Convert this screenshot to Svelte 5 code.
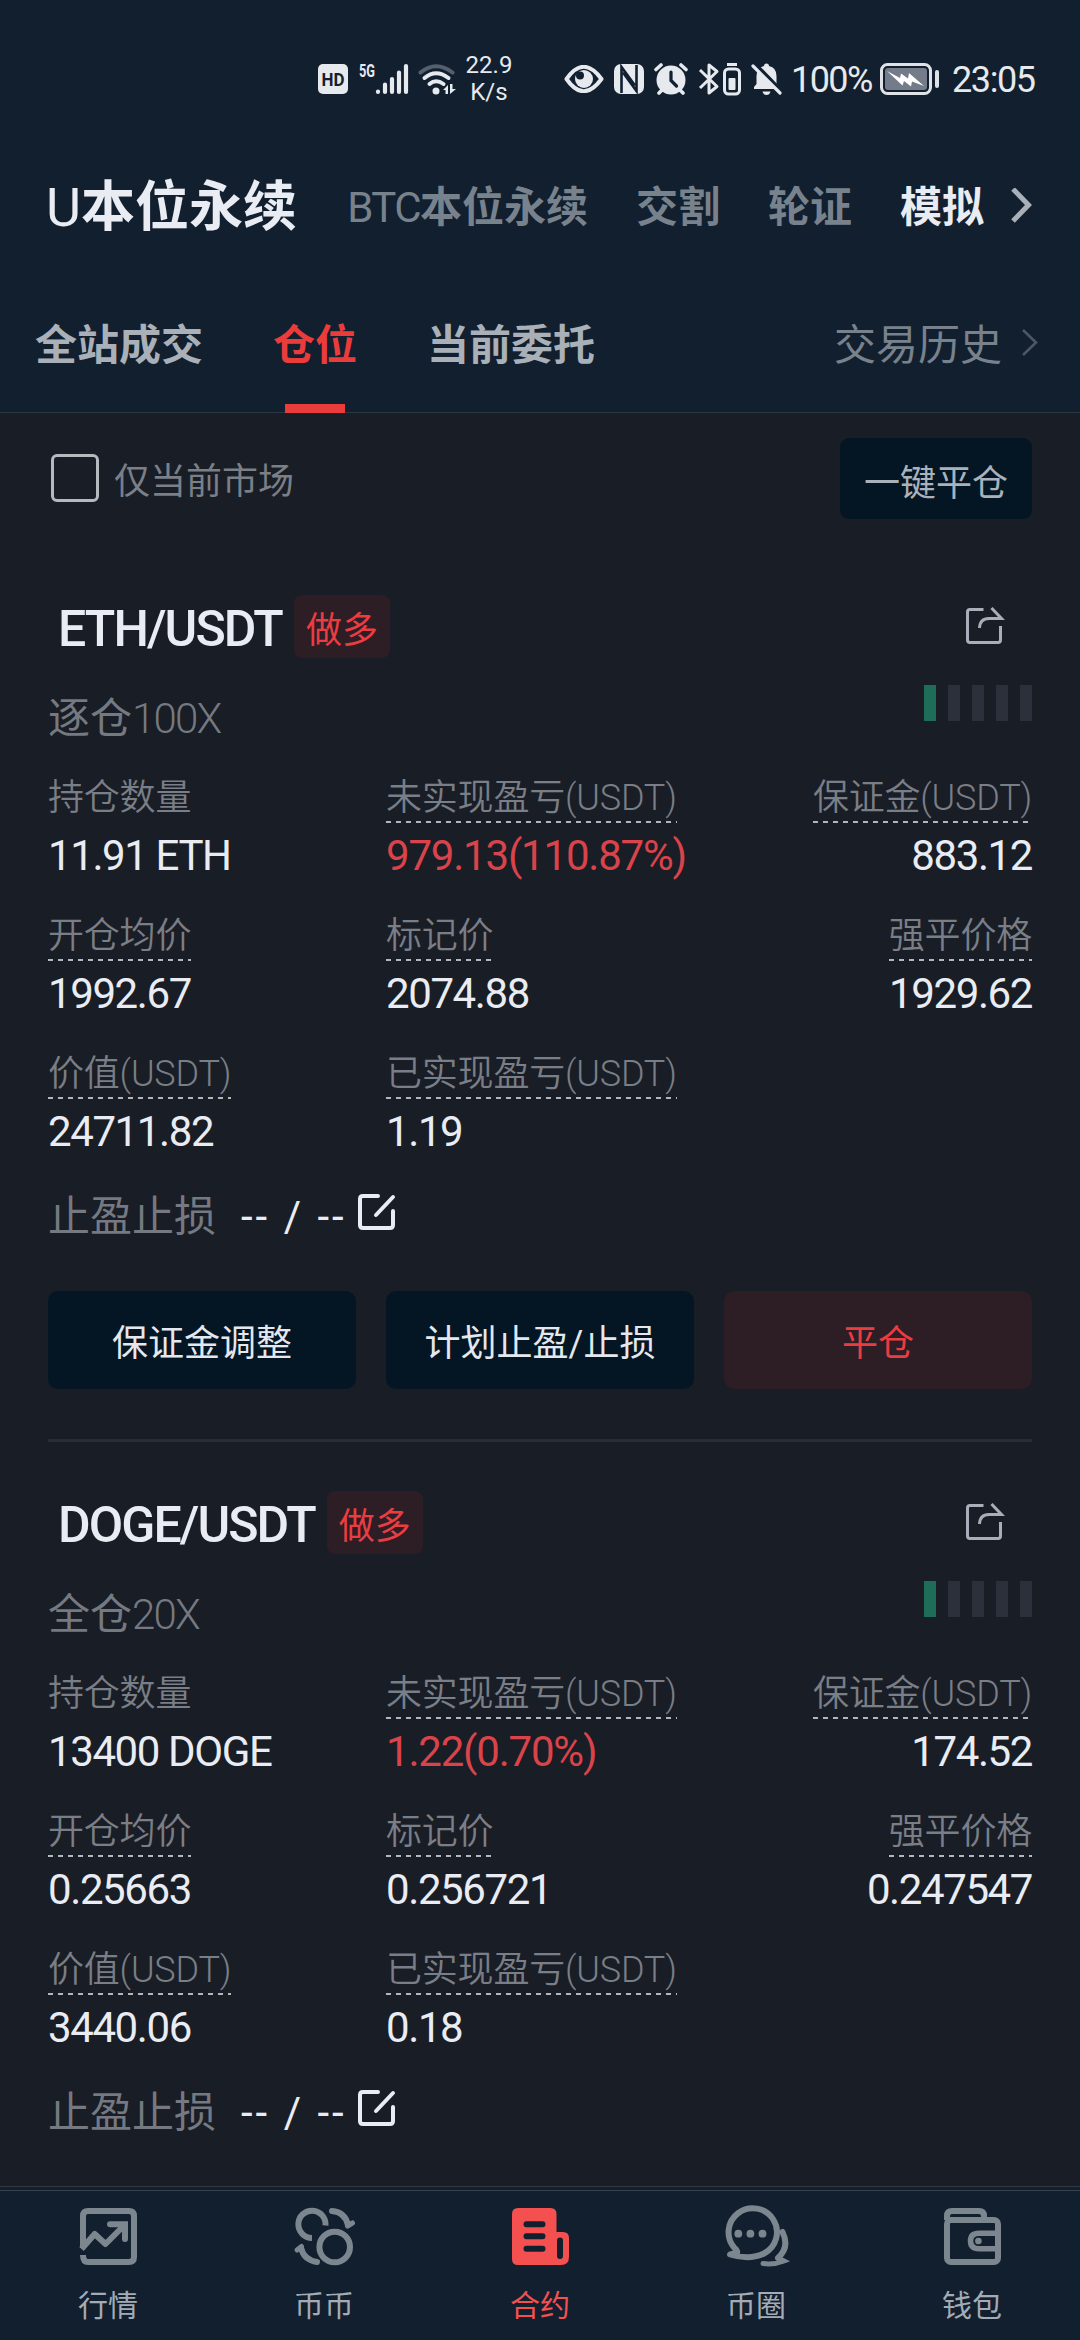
<script lang="ts">
  type Field = {
    label: string;
    value: string;
    plain?: boolean;
    loss?: boolean;
  };

  type Position = {
    pair: string;
    side: string;
    mode: string;
    leverage: string;
    risk: number;
    fields: Field[];
    actions?: boolean;
  };

  const markets = [
    { latin: 'BTC', name: '本位永续' },
    { latin: '', name: '交割' },
    { latin: '', name: '轮证' },
    { latin: '', name: '模拟', bright: true },
  ];

  const positions: Position[] = [
    {
      pair: 'ETH/USDT',
      side: '做多',
      mode: '逐仓',
      leverage: '100X',
      risk: 1,
      fields: [
        { label: '持仓数量', value: '11.91 ETH', plain: true },
        { label: '未实现盈亏(USDT)', value: '979.13(110.87%)', loss: true },
        { label: '保证金(USDT)', value: '883.12' },
        { label: '开仓均价', value: '1992.67' },
        { label: '标记价', value: '2074.88' },
        { label: '强平价格', value: '1929.62' },
        { label: '价值(USDT)', value: '24711.82' },
        { label: '已实现盈亏(USDT)', value: '1.19' },
      ],
      actions: true,
    },
    {
      pair: 'DOGE/USDT',
      side: '做多',
      mode: '全仓',
      leverage: '20X',
      risk: 1,
      fields: [
        { label: '持仓数量', value: '13400 DOGE', plain: true },
        { label: '未实现盈亏(USDT)', value: '1.22(0.70%)', loss: true },
        { label: '保证金(USDT)', value: '174.52' },
        { label: '开仓均价', value: '0.25663' },
        { label: '标记价', value: '0.256721' },
        { label: '强平价格', value: '0.247547' },
        { label: '价值(USDT)', value: '3440.06' },
        { label: '已实现盈亏(USDT)', value: '0.18' },
      ],
    },
  ];

  const navItems = [
    { id: 'quotes', label: '行情' },
    { id: 'spot', label: '币币' },
    { id: 'futures', label: '合约' },
    { id: 'circle', label: '币圈' },
    { id: 'wallet', label: '钱包' },
  ];

  let activeNav = $state('futures');
  let onlyCurrent = $state(false);
</script>

<div class="screen">
  <header>
    <div class="status">
      <svg class="hd" width="30" height="30" viewBox="0 0 30 30">
        <rect width="30" height="30" rx="5" fill="#e6e9ed" />
        <text x="15" y="21.5" text-anchor="middle" textLength="23" lengthAdjust="spacingAndGlyphs" fill="#121f2f">HD</text>
      </svg>
      <svg class="signal" width="50" height="44" viewBox="0 -5 50 44">
        <text x="0" y="14.5" textLength="16" lengthAdjust="spacingAndGlyphs" fill="#e6e9ed">5G</text>
        <g stroke="#e6e9ed" stroke-width="4.2" stroke-linecap="round">
          <path d="M19 29.6V30M26 22.500V30M33 17V30M40 10.500V30M47 4V30" />
        </g>
      </svg>
      <svg class="wifi" width="40" height="34" viewBox="0 0 40 34" fill="none" stroke-width="4" stroke-linecap="round">
        <path d="M2.500 10.500Q18 -2 34.500 10.500" stroke="#54606d" />
        <path d="M6.500 16Q18 6.500 30.500 16M11.500 22Q18 16.500 25.500 22" stroke="#e6e9ed" />
        <circle cx="18" cy="29" r="3.500" fill="#e6e9ed" />
        <path d="M25 28L30 23V32H27.500V28ZM32 22V32L38 27H34.500V22Z" fill="#e6e9ed" />
      </svg>
      <div class="speed"><span>22.9</span><span>K/s</span></div>
      <svg class="eye" width="40" height="28" viewBox="0 0 40 28">
        <path d="M2.500 14Q19.500 -10.500 37.500 14Q19.500 38.500 2.500 14Z" fill="none" stroke="#e6e9ed" stroke-width="4" stroke-linejoin="round" />
        <circle cx="20" cy="14" r="9" fill="#e6e9ed" />
        <circle cx="16" cy="10.500" r="4" fill="#121f2f" />
      </svg>
      <svg class="nfc" width="30" height="30" viewBox="0 0 30 30">
        <rect width="30" height="30" rx="7" fill="#e6e9ed" />
        <path d="M7.500 29V3L21 21.500M22.500 1V27L9 8.500" fill="none" stroke="#121f2f" stroke-width="2.600" />
      </svg>
      <svg class="alarm" width="34" height="32" viewBox="0 0 34 32">
        <circle cx="17" cy="17" r="14.500" fill="#e6e9ed" />
        <path d="M2 6.500L7 2M32 6.500L27 2M5 30L8 27M29 30L26 27" stroke="#e6e9ed" stroke-width="3.600" stroke-linecap="round" />
        <path d="M17 9V17.500L22.500 23" fill="none" stroke="#121f2f" stroke-width="3.200" stroke-linecap="round" />
      </svg>
      <svg class="bluetooth" width="46" height="34" viewBox="0 0 46 34" fill="none" stroke="#e6e9ed" stroke-width="3">
        <path d="M3 8L20 24.500L12 31V3L20 9.500L3 26" stroke-linejoin="round" />
        <rect x="27.500" y="7" width="15" height="25" rx="4" />
        <path d="M30 2.500H40" />
        <rect x="31.500" y="16" width="7" height="12" rx="1" fill="#e6e9ed" stroke="none" />
      </svg>
      <svg class="bell" width="32" height="34" viewBox="0 0 32 34">
        <path d="M3 27V25L5.500 22V14Q5.500 5.500 13 4Q13 1.500 15.500 1.500T18 4Q25.500 5.500 25.500 14V22L28 25V27Z" fill="#e6e9ed" />
        <path d="M11.500 29.500H19.500Q18.500 33 15.500 33T11.500 29.500Z" fill="#e6e9ed" />
        <path d="M4 2L32 31" stroke="#121f2f" stroke-width="4" />
        <path d="M2 4L29 31" stroke="#e6e9ed" stroke-width="3.200" stroke-linecap="round" />
      </svg>
      <span class="percent">100%</span>
      <svg class="battery" width="60" height="32" viewBox="0 0 60 32">
        <rect x="1.500" y="1.500" width="49" height="29" rx="6" fill="none" stroke="#dfe3e8" stroke-width="3" />
        <rect x="5" y="5" width="42" height="22" rx="3" fill="#737c88" />
        <path d="M7 8L20 15L21 10.500L28 15.500L29 10L44 23L32 18.500L31 23.500L24 18L22.500 22.500Z" fill="#fff" />
        <path d="M57 9V23" stroke="#dfe3e8" stroke-width="4" stroke-linecap="round" />
      </svg>
      <span class="clock">23:05</span>
    </div>

    <nav class="markets">
      <h1><span class="latin">U</span>本位永续</h1>
      {#each markets as market}
        <button class="market" class:bright={market.bright}>
          {#if market.latin}<span class="latin">{market.latin}</span>{/if}{market.name}
        </button>
      {/each}
      <svg width="24" height="40" viewBox="0 0 24 40" fill="none" stroke="#a9b0b8" stroke-width="5">
        <path d="M3 1L18.500 17L3 33" />
      </svg>
    </nav>

    <nav class="tabs">
      <button class="tab">全站成交</button>
      <button class="tab active">仓位</button>
      <button class="tab">当前委托</button>
      <button class="history">
        交易历史
        <svg width="18" height="36" viewBox="0 0 18 36" fill="none" stroke="#4b5765" stroke-width="2.600">
          <path d="M2 2L15 14.500L2 27" />
        </svg>
      </button>
    </nav>
  </header>

  <main>
    <div class="toolbar">
      <button class="only" onclick={() => (onlyCurrent = !onlyCurrent)}>
        <span class="box" class:checked={onlyCurrent}></span>
        仅当前市场
      </button>
      <button class="close-all">一键平仓</button>
    </div>

    {#each positions as position}
      <section class="position">
        <div class="title">
          <h2>{position.pair}</h2>
          <span class="side">{position.side}</span>
          <svg class="share" width="44" height="44" viewBox="0 0 44 44" fill="none" stroke="#a9aebb" stroke-width="3">
            <path d="M21.500 6.500H8Q5.500 6.500 5.500 9V37Q5.500 39.500 8 39.500H36Q38.500 39.500 38.500 37V23" />
            <path d="M17.500 25Q18 15.500 27 15.500H39.500L29.500 5" />
          </svg>
        </div>

        <div class="leverage">
          <span>{position.mode}<span class="times">{position.leverage}</span></span>
          <div class="risk">
            {#each Array(5) as _, i}
              <i class:on={i < position.risk}></i>
            {/each}
          </div>
        </div>

        <div class="fields">
          {#each position.fields as field}
            <div class="field">
              <span class="label" class:dashed={!field.plain}>{field.label}</span>
              <span class="value" class:loss={field.loss}>{field.value}</span>
            </div>
          {/each}
        </div>

        <div class="stops">
          <span class="stops-label">止盈止损</span>
          <span class="stops-value">-- / --</span>
          <svg width="40" height="40" viewBox="0 0 40 40" fill="none" stroke="#e9ecf2" stroke-width="4" stroke-linecap="round">
            <path d="M22 5H7Q4 5 4 8V34Q4 37 7 37H34Q37 37 37 34V20" />
            <path d="M20 24L37 6" />
          </svg>
        </div>

        {#if position.actions}
          <div class="actions">
            <button>保证金调整</button>
            <button>计划止盈/止损</button>
            <button class="danger">平仓</button>
          </div>
        {/if}
      </section>
    {/each}
  </main>

  <nav class="bottom">
    {#each navItems as item}
      <button class:active={activeNav === item.id} onclick={() => (activeNav = item.id)}>
        <svg width="72" height="72" viewBox="0 0 72 72" fill="none" stroke="currentColor" stroke-width="6">
          {#if item.id === 'quotes'}
            <path d="M11 47V15Q11 10 16 10H57Q62 10 62 15V56Q62 61 57 61H16Q11 61 11 54" />
            <path d="M9.500 48L22.700 33L33.500 43L52 24.500" stroke-linejoin="round" />
            <path d="M38 23.300H53V38" stroke-linecap="round" />
          {:else if item.id === 'spot'}
            <path d="M37.500 24.500A13.600 13.600 0 1 0 24 36.900" />
            <circle cx="46.700" cy="46" r="15.300" />
            <path d="M44 10Q57 11 60 24M29 61Q16 59 13 47" stroke-linecap="round" />
            <path d="M59.500 25L64.500 22M13.500 45.500L9 49" stroke-width="5" stroke-linecap="round" />
          {:else if item.id === 'futures'}
            <path d="M14 7H46.500Q52.500 7 52.500 13V31H59Q65 31 65 37V56Q65 64 57 64H14Q8 64 8 58V13Q8 7 14 7Z" fill="currentColor" stroke="none" />
            <path d="M22.500 23.300H38.500M22.500 35.300H38.500M22.500 47.700H38.500M56 39.500V55" stroke="#121f2f" stroke-linecap="round" />
          {:else if item.id === 'circle'}
            <path d="M17 52Q18 50 14.500 47A24.200 24 0 1 1 44 52.500Q30 59.500 10 53.500L17 52" stroke-linejoin="round" />
            <g fill="currentColor" stroke="none">
              <circle cx="18.300" cy="32.700" r="3.900" />
              <circle cx="30.400" cy="32.700" r="3.900" />
              <circle cx="42.500" cy="32.700" r="3.900" />
            </g>
            <path d="M62.500 31Q70 46 58 57" stroke-linecap="round" />
            <path d="M43 62.500Q54 64 64 60L58 57" stroke-linecap="round" stroke-width="5" />
          {:else}
            <path d="M11 19V15Q11 10 16 10H43Q48 10 48 15V19" />
            <rect x="11" y="19" width="51" height="42" rx="4" />
            <path d="M62 32.300H43Q34.500 32.300 34.500 40T43 47.800H62" stroke-width="5.500" />
            <circle cx="42.400" cy="40" r="3.300" fill="currentColor" stroke="none" />
          {/if}
        </svg>
        <span>{item.label}</span>
      </button>
    {/each}
  </nav>
</div>

<style>
  :global(body) {
    margin: 0;
    background: #191d25;
  }

  .screen {
    width: 1080px;
    height: 2340px;
    display: flex;
    flex-direction: column;
    overflow: hidden;
    background: #191d25;
    color: #e9ecf2;
    font-family: Roboto, 'Noto Sans CJK SC', sans-serif;
  }

  button {
    padding: 0;
    border: 0;
    background: none;
    color: inherit;
    font: inherit;
    white-space: nowrap;
  }

  h1,
  h2 {
    margin: 0;
  }

  svg {
    display: block;
    flex: none;
  }

  header {
    height: 412px;
    flex: none;
    background: #121f2f;
    border-bottom: 1px solid #2c3744;
  }

  .status {
    height: 150px;
    box-sizing: border-box;
    padding: 8px 0 0 318px;
    display: flex;
    align-items: center;
    color: #e6e9ed;
    font-size: 36px;
    line-height: 40px;
  }

  .hd text {
    font-size: 18px;
    font-weight: 700;
  }

  .signal {
    margin-left: 11px;
  }

  .signal text {
    font-size: 19px;
    font-weight: 700;
  }

  .wifi {
    margin-left: 9px;
  }

  .speed {
    width: 56px;
    margin-left: 3px;
    display: flex;
    flex-direction: column;
    align-items: center;
    font-size: 24px;
    line-height: 27px;
  }

  .eye {
    margin-left: 47px;
  }

  .nfc {
    margin-left: 10px;
  }

  .alarm {
    margin-left: 10px;
  }

  .bluetooth {
    margin-left: 9px;
  }

  .bell {
    margin-left: 8px;
  }

  .percent {
    width: 86px;
    margin-left: 8px;
    letter-spacing: -1.6px;
  }

  .battery {
    margin-left: 3px;
  }

  .clock {
    margin-left: 12px;
    letter-spacing: -1.4px;
  }

  .percent,
  .clock {
    padding-top: 2px;
  }

  .markets {
    height: 105px;
    padding: 5px 46px 0;
    display: flex;
    align-items: center;
  }

  .latin {
    font-weight: 400;
  }

  h1 {
    font-size: 54px;
    font-weight: 700;
    line-height: 80px;
    white-space: nowrap;
  }

  h1 .latin {
    font-weight: 450;
  }

  .market {
    margin-right: 48px;
    color: #78828d;
    font-size: 42px;
    font-weight: 700;
    line-height: 78px;
  }

  .market .latin {
    font-weight: 450;
    letter-spacing: -1.6px;
  }

  .market:first-of-type {
    margin-left: auto;
  }

  .market.bright {
    margin-right: 26px;
    color: #e9ecf0;
  }

  .tabs {
    height: 153px;
    padding: 0 41px 0 35px;
    display: flex;
    color: #a9b0b8;
    font-size: 42px;
    line-height: 171px;
  }

  .tab {
    margin-right: 70px;
    height: 153px;
    position: relative;
    font-weight: 700;
  }

  .tab.active {
    color: #eb3c3c;
  }

  .tab.active::after {
    content: '';
    position: absolute;
    left: 12px;
    bottom: 0;
    width: 60px;
    height: 9px;
    background: #eb3c3c;
  }

  .history {
    margin-left: auto;
    height: 171px;
    display: flex;
    align-items: center;
    gap: 19px;
    color: #78828d;
  }

  main {
    flex: 1;
    min-height: 0;
    overflow: hidden;
    padding: 0 48px;
  }

  .toolbar {
    padding-top: 25px;
    display: flex;
    justify-content: space-between;
    font-size: 36px;
    line-height: 86px;
  }

  .only {
    height: 81px;
    padding: 6px 0 0 3px;
    display: flex;
    align-items: center;
    gap: 15px;
    color: #7b7f87;
  }

  .box {
    width: 48px;
    height: 48px;
    box-sizing: border-box;
    margin-bottom: 7px;
    border: 3px solid #b6b9be;
    border-radius: 6px;
  }

  .box.checked {
    background: #eb3c3c;
  }

  .close-all {
    width: 192px;
    height: 81px;
    padding-top: 3px;
    border-radius: 9px;
    background: #041623;
    color: #a9b2bb;
  }

  .only,
  .close-all {
    box-sizing: border-box;
  }

  .position {
    height: 844px;
    padding-top: 76px;
  }

  .position + .position {
    padding-top: 49px;
    border-top: 3px solid #272c37;
  }

  .title {
    height: 63px;
    display: flex;
    align-items: center;
  }

  h2 {
    padding: 6px 0 0 10px;
    font-size: 50px;
    font-weight: 500;
    line-height: 63px;
    letter-spacing: -1.9px;
  }

  .side {
    width: 96px;
    height: 63px;
    margin-left: 12px;
    border-radius: 8px;
    background: #2d1d25;
    color: #eb3c42;
    font-size: 36px;
    line-height: 72px;
    text-align: center;
  }

  .share {
    margin: 0 26px 4px auto;
  }

  .leverage {
    height: 63px;
    padding-top: 27px;
    display: flex;
    justify-content: space-between;
    color: #757981;
    font-size: 42px;
    line-height: 68px;
  }

  .times {
    font-weight: 350;
    letter-spacing: -1.8px;
  }

  .risk {
    display: flex;
    gap: 12px;
  }

  .risk i {
    width: 12px;
    height: 36px;
    background: #2c303a;
  }

  .risk i.on {
    background: #1f6d59;
  }

  .fields {
    padding-top: 25px;
    display: grid;
    grid-template-columns: 338px 338px 308px;
    grid-auto-rows: 138px;
  }

  .field {
    display: flex;
    flex-direction: column;
    align-items: flex-start;
  }

  .field:nth-child(3n) {
    align-items: flex-end;
  }

  .label {
    height: 50px;
    color: #7a7e86;
    font-size: 36px;
    font-weight: 350;
    line-height: 51px;
    letter-spacing: -0.2px;
  }

  .dashed {
    background: repeating-linear-gradient(90deg, #b3b6bc 0 5px, transparent 5px 10px) left bottom / 100% 2px no-repeat;
  }

  .value {
    padding-top: 6px;
    font-size: 42px;
    line-height: 54px;
    letter-spacing: -1.4px;
  }

  .value.loss {
    color: #d9434a;
    letter-spacing: -1.2px;
  }

  .stops {
    height: 60px;
    display: flex;
    align-items: center;
    font-size: 42px;
    line-height: 58px;
  }

  .stops-label {
    width: 193px;
    color: #757981;
  }

  .stops-value {
    width: 115px;
    letter-spacing: 3px;
  }

  .stops svg {
    margin-bottom: 12px;
  }

  .actions {
    padding-top: 44px;
    display: grid;
    grid-template-columns: repeat(3, 308px);
    gap: 30px;
  }

  .actions button {
    height: 98px;
    border-radius: 10px;
    background: #041623;
    color: #e4e8ee;
    font-size: 36px;
  }

  .actions .danger {
    background: #2d1d25;
    color: #eb3c42;
  }

  .bottom {
    height: 150px;
    flex: none;
    padding-top: 3px;
    display: grid;
    grid-template-columns: repeat(5, 216px);
    background: linear-gradient(#38414c, #38414c) 0 3px / 100% 1px no-repeat #121f2f;
    border-top: 1px solid #333940;
  }

  .bottom button {
    padding-top: 11px;
    display: flex;
    flex-direction: column;
    align-items: center;
    color: #7c868e;
    font-size: 30px;
    line-height: 66px;
  }

  .bottom button span {
    color: #a3abb5;
  }

  .bottom .active,
  .bottom .active span {
    color: #f4504f;
  }
</style>
